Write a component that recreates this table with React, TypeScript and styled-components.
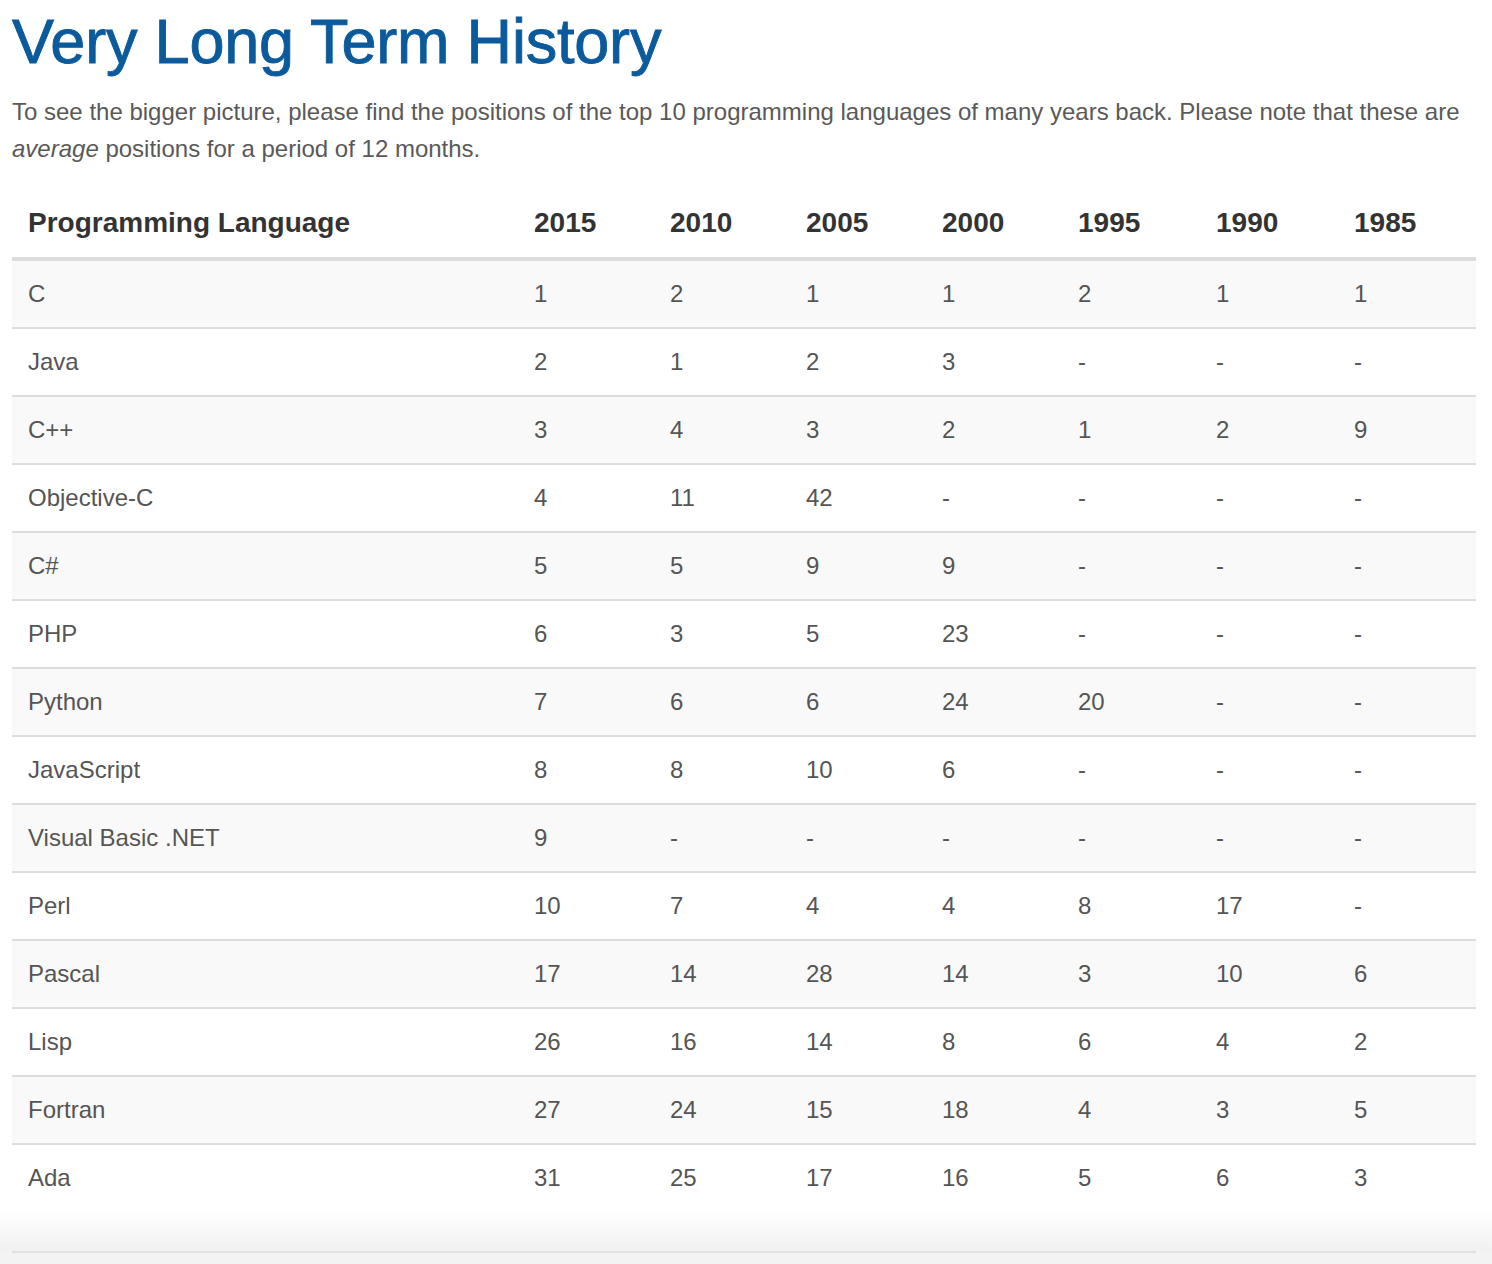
import React from "react";
import styled, { createGlobalStyle } from "styled-components";

const GlobalStyle = createGlobalStyle`
  html, body {
    margin: 0;
    padding: 0;
    background: #f3f3f3;
  }
  body {
    font-family: "Liberation Sans", Arial, Helvetica, sans-serif;
  }
`;

const Page = styled.div`
  background: #ffffff;
  padding: 7px 16px 0 12px;
`;

const Title = styled.h1`
  margin: 0;
  font-size: 63px;
  line-height: 68px;
  font-weight: 400;
  color: #0a5a9c;
  -webkit-text-stroke: 0.9px #0a5a9c;
  letter-spacing: -0.2px;
`;

const Intro = styled.p`
  margin: 18px 0 0 0;
  font-size: 24px;
  line-height: 37px;
  color: #595959;
  em {
    font-style: italic;
  }
`;

const Table = styled.table`
  margin-top: 24px;
  width: 100%;
  border-collapse: collapse;
  border-spacing: 0;
  table-layout: fixed;

  tbody tr + tr td {
    border-top: 2px solid #dddddd;
  }
`;

const HeadCell = styled.th`
  text-align: left;
  font-size: 28px;
  font-weight: 700;
  color: #333333;
  line-height: 36px;
  padding: 14px 16px 16px 16px;
  border-bottom: 4px solid #dddddd;
  white-space: nowrap;
`;

const Row = styled.tr<{ $striped: boolean }>`
  background: ${(p) => (p.$striped ? "#f9f9f9" : "#ffffff")};
`;

const Cell = styled.td`
  text-align: left;
  font-size: 24px;
  line-height: 34px;
  color: #555555;
  padding: 16px 16px;
  white-space: nowrap;
`;

const Footer = styled.div`
  height: 40px;
  background: linear-gradient(#ffffff, #f1f1f1);
`;

const FooterRule = styled.div`
  margin: 0 16px 0 12px;
  height: 2px;
  background: #e2e2e2;
`;

const Rest = styled.div`
  height: 12px;
`;

const years = ["2015", "2010", "2005", "2000", "1995", "1990", "1985"];
const widths = [506, 136, 136, 136, 136, 138, 138, 138];

const data: [string, string[]][] = [
  ["C", ["1", "2", "1", "1", "2", "1", "1"]],
  ["Java", ["2", "1", "2", "3", "-", "-", "-"]],
  ["C++", ["3", "4", "3", "2", "1", "2", "9"]],
  ["Objective-C", ["4", "11", "42", "-", "-", "-", "-"]],
  ["C#", ["5", "5", "9", "9", "-", "-", "-"]],
  ["PHP", ["6", "3", "5", "23", "-", "-", "-"]],
  ["Python", ["7", "6", "6", "24", "20", "-", "-"]],
  ["JavaScript", ["8", "8", "10", "6", "-", "-", "-"]],
  ["Visual Basic .NET", ["9", "-", "-", "-", "-", "-", "-"]],
  ["Perl", ["10", "7", "4", "4", "8", "17", "-"]],
  ["Pascal", ["17", "14", "28", "14", "3", "10", "6"]],
  ["Lisp", ["26", "16", "14", "8", "6", "4", "2"]],
  ["Fortran", ["27", "24", "15", "18", "4", "3", "5"]],
  ["Ada", ["31", "25", "17", "16", "5", "6", "3"]],
];

export default function App() {
  return (
    <>
      <GlobalStyle />
      <Page>
        <Title>Very Long Term History</Title>
        <Intro>
          To see the bigger picture, please find the positions of the top 10
          programming languages of many years back. Please note that these are{" "}
          <em>average</em> positions for a period of 12 months.
        </Intro>
        <Table>
          <colgroup>
            {widths.map((w, i) => (
              <col key={i} style={{ width: w }} />
            ))}
          </colgroup>
          <thead>
            <tr>
              <HeadCell>Programming Language</HeadCell>
              {years.map((y) => (
                <HeadCell key={y}>{y}</HeadCell>
              ))}
            </tr>
          </thead>
          <tbody>
            {data.map(([lang, vals], i) => (
              <Row key={lang} $striped={i % 2 === 0}>
                <Cell>{lang}</Cell>
                {vals.map((v, j) => (
                  <Cell key={j}>{v}</Cell>
                ))}
              </Row>
            ))}
          </tbody>
        </Table>
      </Page>
      <Footer />
      <FooterRule />
      <Rest />
    </>
  );
}
